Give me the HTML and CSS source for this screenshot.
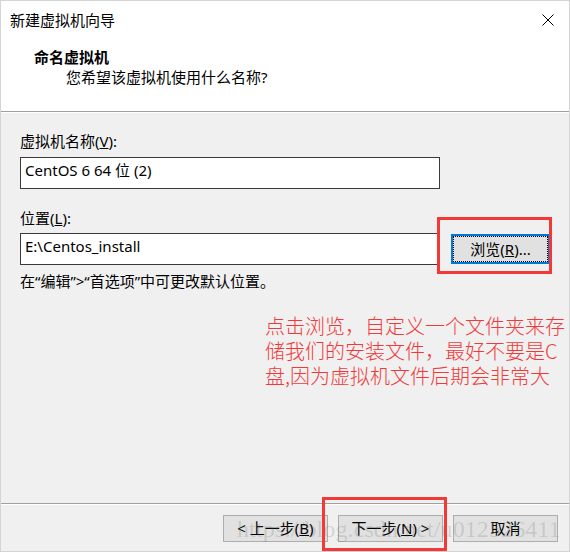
FILE: index.html
```html
<!DOCTYPE html>
<html lang="zh-CN">
<head>
<meta charset="utf-8">
<title>新建虚拟机向导</title>
<link rel="stylesheet" href="styles.css">
</head>
<body>
<div class="window">
  <div class="header">
    <div class="titlebar">
      <span class="title">新建虚拟机向导</span>
      <svg class="close" width="12" height="12" viewBox="0 0 12 12"><path d="M0.5 0.5 L11.5 11.5 M11.5 0.5 L0.5 11.5" stroke="#000" stroke-width="1" fill="none"/></svg>
    </div>
    <div class="head-title">命名虚拟机</div>
    <div class="head-sub">您希望该虚拟机使用什么名称?</div>
  </div>
  <div class="body">
    <div class="label">虚拟机名称(<u>V</u>):</div>
    <div class="input">CentOS 6 64 位 (2)</div>
    <div class="label label2">位置(<u>L</u>):</div>
    <div class="row">
      <div class="input">E:\Centos_install</div>
      <button class="btn browse">浏览(<u>R</u>)...</button>
    </div>
    <div class="hint">在“编辑”&gt;“首选项”中可更改默认位置。</div>
    <div class="note">点击浏览，自定义一个文件夹来存<br>储我们的安装文件，最好不要是C<br>盘,因为虚拟机文件后期会非常大</div>
  </div>
  <div class="footer">
    <button class="btn">&lt; 上一步(<u>B</u>)</button>
    <button class="btn">下一步(<u>N</u>) &gt;</button>
    <button class="btn">取消</button>
  </div>
  <div class="watermark">https://blog.csdn.net/u012526411</div>
  <div class="mark mark1"></div>
  <div class="mark mark2"></div>
</div>
</body>
</html>
```
FILE: styles.css
```css
* { box-sizing: border-box; }
html, body { margin: 0; padding: 0; }
body {
  width: 570px;
  height: 552px;
  font-family: "Noto Sans", "Noto Sans CJK SC", sans-serif;
  font-size: 15px;
  color: #000;
}
.window {
  position: relative;
  width: 570px;
  height: 552px;
  border: 1px solid #d4d4d4;
  background: #f0f0f0;
  display: flex;
  flex-direction: column;
  overflow: hidden;
}
.header {
  background: #fff;
  height: 111px;
  border-bottom: 1px solid #a0a0a0;
  box-shadow: 0 1px 0 #fff;
}
.titlebar {
  height: 38px;
  display: flex;
  align-items: center;
  justify-content: space-between;
  padding: 0 15px 0 9px;
  line-height: 20px;
}
.close { display: block; }
.head-title {
  margin-top: 8px;
  margin-left: 33px;
  font-weight: bold;
  line-height: 20px;
}
.head-sub {
  margin-left: 65px;
  line-height: 20px;
}
.body {
  flex: 1;
  padding: 19px 0 0 19px;
}
.label { line-height: 20px; }
.label2 { margin-top: 19px; }
.input {
  width: 420px;
  height: 32px;
  margin-top: 6px;
  border: 1px solid #3a3a3a;
  background: #fff;
  padding-left: 4px;
  line-height: 24px;
  white-space: nowrap;
}
.row {
  display: flex;
  align-items: center;
  gap: 11px;
  margin-top: 5px;
}
.row .input { margin-top: 0; }
.btn {
  font-family: "Noto Sans", "Noto Sans CJK SC", sans-serif;
  font-size: 15px;
  color: #000;
  background: #e1e1e1;
  border: 1px solid #adadad;
  padding: 0;
  width: 105px;
  height: 27px;
  line-height: 23px;
  border-radius: 0;
}
.browse {
  width: 99px;
  height: 30px;
  border: 2px solid #0078d7;
  outline: 1px dotted #000;
  outline-offset: -3px;
}
.hint {
  margin-top: 6px;
  line-height: 20px;
}
.note {
  margin-top: 22px;
  margin-left: 245px;
  font-size: 20px;
  line-height: 25px;
  color: #f03a3a;
  font-weight: 300;
  white-space: nowrap;
  font-family: "Noto Sans CJK SC", sans-serif;
}
.footer {
  height: 48px;
  border-top: 1px solid #a0a0a0;
  box-shadow: inset 0 1px 0 #fff;
  display: flex;
  justify-content: flex-end;
  align-items: flex-start;
  gap: 10px;
  padding: 11px 11px 0 0;
}
.watermark {
  position: absolute;
  left: 236px;
  top: 516px;
  font-family: "Liberation Serif", serif;
  font-size: 24px;
  line-height: 24px;
  letter-spacing: 0.1px;
  color: rgba(110, 110, 110, 0.22);
  white-space: nowrap;
  pointer-events: none;
}
.mark {
  position: absolute;
  border: 3px solid #f33838;
}
.mark1 { left: 436px; top: 216px; width: 115px; height: 57px; }
.mark2 { left: 321px; top: 496px; width: 125px; height: 54px; }
```
